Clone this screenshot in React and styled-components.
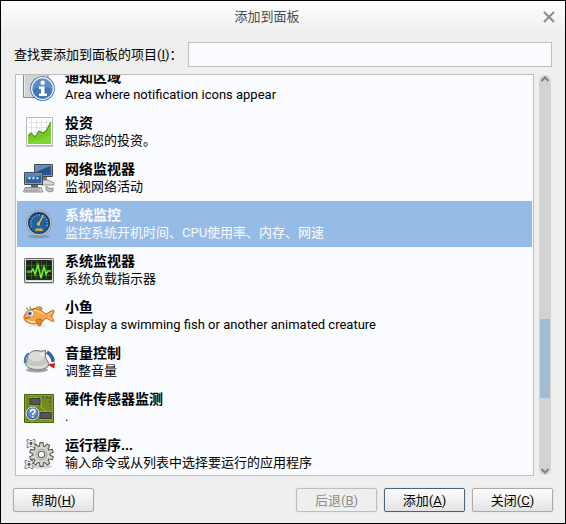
import React, { useLayoutEffect, useRef, useState } from "react";
import styled, { createGlobalStyle, css } from "styled-components";

const GlobalStyle = createGlobalStyle`
  * { box-sizing: border-box; }
  body { margin: 0; background: #efefef; }
  body, button, input {
    font-family: Roboto, "Noto Sans CJK SC", sans-serif;
    font-size: 13px;
    line-height: 17px;
  }
`;

const Dialog = styled.main`
  display: flex;
  flex-direction: column;
  height: 100vh;
  border: 1px solid #000;
  background: #efefef;
  color: #000;
`;

const TitleBar = styled.header`
  display: grid;
  grid-template-columns: 1fr 32px;
  align-items: center;
  height: 30px;
  flex: none;
  background: linear-gradient(#fefefe, #efefef);
`;

const Title = styled.h1`
  margin: 0;
  text-align: center;
  font-size: 13px;
  font-weight: 400;
  color: #4c4c4c;
`;

const CloseButton = styled.button`
  display: flex;
  justify-content: center;
  padding: 2px 0 0;
  border: 0;
  background: none;
  color: #8f8f8f;
`;

const SearchRow = styled.div`
  display: flex;
  align-items: center;
  gap: 8px;
  flex: none;
  padding: 11px 13px 7px;
`;

const SearchLabel = styled.label`
  flex: none;
  width: 166px;
  white-space: nowrap;
`;

const SearchInput = styled.input`
  flex: 1;
  min-width: 0;
  height: 25px;
  padding: 0 6px;
  border: 1px solid #bdbdbd;
  background: #f9fbff;
  outline: 0;
`;

const Body = styled.section`
  display: flex;
  gap: 5px;
  flex: 1;
  min-height: 0;
  padding: 0 14px;
`;

const ListBox = styled.ul`
  flex: 1;
  min-width: 0;
  margin: 0;
  padding: 0 1px;
  list-style: none;
  overflow-y: auto;
  scrollbar-width: none;
  border: 1px solid #bdbdbd;
  background: #f9fbff;
`;

const Item = styled.li`
  display: flex;
  align-items: center;
  gap: 10px;
  height: 46px;
  padding: 0 6px;
  ${(p) => p.$selected && css`
    background: #96bbe6;
    color: #f9fbff;
  `}
`;

const IconArt = styled.svg`
  flex: none;
  width: 32px;
  height: 32px;
`;

const ItemText = styled.div`
  display: grid;
  gap: 1px;
  min-width: 0;
  white-space: nowrap;
`;

const ItemTitle = styled.div`
  font-size: 14px;
  line-height: 16px;
  font-weight: 700;
`;

const ItemNote = styled.div`
  font-size: 13px;
`;

const Scrollbar = styled.div`
  display: flex;
  flex-direction: column;
  align-items: stretch;
  width: 12px;
  margin: 1px 0;
  padding: 0 1px;
  border-radius: 6px;
  background: #d3d3d3;
`;

const Arrow = styled.svg`
  width: 10px;
  height: 8px;
  flex: none;
`;

const TrackSpace = styled.div`
  flex: ${(p) => p.$part} 1 0;
`;

const Thumb = styled.div`
  flex: 79 1 0;
  background: #a1bdd6;
`;

const Footer = styled.footer`
  display: flex;
  gap: 7px;
  flex: none;
  padding: 12px 12px 11px;
`;

const ActionButton = styled.button`
  width: 81px;
  height: 24px;
  padding: 0;
  border: 1px solid #aaa;
  border-radius: 2px;
  background: linear-gradient(#fdfdfd, #e3e3e3);
  box-shadow: 0 0 0 1px #e9e9e9;
  color: #000;
  ${(p) => p.$primary && css`
    border-color: #46647f;
    box-shadow: 0 0 0 1px #dfe8ef;
  `}
  &:first-child { margin-right: auto; }
  &:disabled {
    border-color: #bdbdbd;
    background: #efefef;
    color: #8c8c8c;
  }
`;

const NotificationIcon = () => (
  <IconArt viewBox="0 0 32 32" aria-hidden="true">
    <path d="M.5 1H25V27.5H.5z" fill="#d2d4cd" stroke="#888a85" />
    <path d="M1.5 2V26.5" stroke="#eeeeec" />
    <circle cx="19.5" cy="18.5" r="12.3" fill="#3465a4" />
    <circle cx="19.5" cy="18.5" r="10.8" fill="#5c8ec6" stroke="#fff" strokeWidth="1.3" />
    <path d="M9.5 19a10 10 0 0 0 20 0q-10-4-20 0" fill="#4478b5" />
    <circle cx="19.7" cy="12.8" r="2.2" fill="#fff" />
    <path d="M16 16.5h5.5v7H24V26h-8v-2.5h2V19h-2z" fill="#fff" />
  </IconArt>
);

const StockIcon = () => (
  <IconArt viewBox="0 0 32 32" aria-hidden="true">
    <path d="M2.5 30.5h28" stroke="#c9cbc6" />
    <path d="M3.5 1.5h26v28h-26z" fill="#fff" stroke="#b5b7b2" />
    <path d="M8.5 3v25M13.5 3v25M18.5 3v25M23.5 3v25M5 6.5h23M5 11.5h23M5 16.5h23M5 21.5h23" stroke="#dcdedb" strokeWidth=".8" />
    <path d="M5 20l3-3 4 4 4-6 4 2 3-2 5-9v22H5z" fill="#73c92d" />
    <path d="M5 20l3-3 4 4 4-6 4 2 3-2 5-9" fill="none" stroke="#4e9a06" strokeWidth="1.2" />
    <path d="M5 25q12 0 23-6v9H5z" fill="#8ae234" opacity=".55" />
  </IconArt>
);

const NetworkIcon = () => (
  <IconArt viewBox="0 0 32 32" aria-hidden="true">
    <path d="M15 18h10l6 3v2H18z" fill="#d7d9d4" stroke="#777974" strokeWidth=".8" />
    <path d="M11.5 2.5h18v12h-18z" fill="#d3d7cf" stroke="#454744" />
    <path d="M12.500 3.500h16v10h-16z" fill="#25558e" />
    <path d="M12.500 3.500h16L12.500 10z" fill="#5f8fc2" />
    <path d="M18 15h6v3h-6z" fill="#777974" />
    <path d="M8 23h7v3H8z" fill="#666864" />
    <path d="M1.500 10.500h18v12h-18z" fill="#d3d7cf" stroke="#454744" />
    <path d="M2.500 11.500h16v10h-16z" fill="#2d609d" />
    <path d="M2.500 11.500h16v2L2.500 17z" fill="#5784b8" />
    <path d="M5.500 15.200h2v2h-2zM9.500 15.200h2v2h-2zM13.500 15.200h2v2h-2z" fill="#eaf2fb" />
    <path d="M2 25.500h16l2 4.500H.5z" fill="#d3d7cf" stroke="#777974" strokeWidth=".8" />
    <path d="M3 27h14M2 28.700h14" stroke="#8b8d88" strokeDasharray="2 .6" />
    <path d="M23 24.500l4 2 3-.5v3l-4 1-3-2z" fill="#c4c6c1" stroke="#777974" strokeWidth=".8" />
  </IconArt>
);

const GaugeIcon = () => (
  <IconArt viewBox="0 0 32 32" aria-hidden="true">
    <ellipse cx="16" cy="28.500" rx="11" ry="1.700" fill="#6787ac" opacity=".65" />
    <circle cx="16" cy="15" r="13" fill="#9c9f9c" />
    <circle cx="16" cy="15" r="12" fill="#bfc2c0" />
    <circle cx="16" cy="15" r="11" fill="#103d70" />
    <circle cx="16" cy="15.500" r="9.500" fill="#1e619d" />
    <path d="M8.500 19A8.300 8.300 0 1 1 23.500 19" fill="none" stroke="#91b9dc" strokeWidth="2" strokeDasharray=".8 2" />
    <path d="M15 17L20.500 7" stroke="#f6c32a" strokeWidth="1.500" />
    <circle cx="15.500" cy="16" r="1.800" fill="#e9b530" />
    <path d="M12.500 20.500h7v2.500h-7z" fill="#f1b73b" />
    <path d="M14.500 21v2M17 21v2" stroke="#6f6540" strokeWidth=".6" />
  </IconArt>
);

const MonitorIcon = () => (
  <IconArt viewBox="0 0 32 32" aria-hidden="true">
    <path d="M1 28h30v2H1z" fill="#b1b4b0" opacity=".6" />
    <rect x="1.500" y="4.500" width="29" height="24" rx="1" fill="#d8dad5" stroke="#646661" />
    <path d="M3.500 6.500h25v19h-25z" fill="#192813" stroke="#2a2c29" />
    <path d="M8.500 7v18M13.500 7v18M18.500 7v18M23.500 7v18M4 11.500h24M4 16.500h24M4 21.500h24" stroke="#34742a" strokeWidth=".8" />
    <path d="M4 18h4l2-3 2 5 3-9 3 13 3-11 2 7 2-3h3" fill="none" stroke="#3e991c" strokeWidth="2.400" opacity=".55" />
    <path d="M4 18h4l2-3 2 5 3-9 3 13 3-11 2 7 2-3h3" fill="none" stroke="#82f33b" strokeWidth="1.200" />
    <path d="M5 27.500h22" stroke="#fff" strokeWidth=".8" />
  </IconArt>
);

const FishIcon = () => (
  <IconArt viewBox="0 0 32 32" aria-hidden="true">
    <ellipse cx="14" cy="26" rx="9" ry="1.200" fill="#c9cbd0" opacity=".5" />
    <path d="M11 9q5-4 8-1l-1 4z" fill="#f39b36" stroke="#b75f13" strokeWidth=".8" />
    <path d="M.8 17Q3 9 11 9q7 0 12 5l7-4q2 0 .5 3l-2 4 2 3q1 2-1 1.500L23 18q-4 6-13 6Q1 23 .8 17z" fill="#f5a44a" stroke="#bd6516" strokeWidth=".9" />
    <path d="M3 19q9 5 17-1-4 5-11 5-4-1-6-4z" fill="#ffe0ad" />
    <path d="M11 10q7 1 10 5" stroke="#ffd293" strokeWidth="1.500" fill="none" />
    <path d="M13 20q5-2 6 0l-1 5-2 1q-3-2-3-6z" fill="#e78325" stroke="#b75f13" strokeWidth=".8" />
    <path d="M2 18q3 1 5-1" fill="none" stroke="#9e4708" />
    <circle cx="7.500" cy="13.500" r="3.300" fill="#fff" stroke="#b97539" strokeWidth=".6" />
    <circle cx="7" cy="13.500" r="1.900" fill="#508ac6" />
    <circle cx="6.700" cy="13.500" r=".9" fill="#182b46" />
    <path d="M5 10L3.500 7.500M7.500 9.500L7 6.500M9.500 10L11 8" stroke="#4c4c4c" strokeWidth=".9" />
    <path d="M25 15l4-3M25 17l4 3" stroke="#ffd293" />
  </IconArt>
);

const VolumeIcon = () => (
  <IconArt viewBox="0 0 32 32" aria-hidden="true">
    <path d="M2 17Q1 10 6 7.500" fill="none" stroke="#3f72ad" strokeWidth="2" />
    <path d="M24 6q6 4 6 10" fill="none" stroke="#2b62a4" strokeWidth="3.500" />
    <path d="M24.500 18.500l7.500-1.500-.8 5.500z" fill="#e31212" />
    <ellipse cx="14" cy="24" rx="11" ry="2.500" fill="#777" opacity=".65" />
    <path d="M5 10q2-5.500 9-5.500l5 .8 3.500-1L22.500 11l3.500 7q-1 6-12 6-10-1-11.500-6z" fill="#c6c8c2" stroke="#777974" />
    <path d="M4 18q4 3 11 2.500 6-.5 9.500-3.500Q24 22 14 22.500 5 22 4 18z" fill="#e2e3df" />
    <ellipse cx="13.500" cy="10.500" rx="8" ry="4.800" fill="#dcddd8" />
    <path d="M16 8l5.500-2.500-.5 6z" fill="#eeeeec" />
  </IconArt>
);

const SensorIcon = () => (
  <IconArt viewBox="0 0 32 32" aria-hidden="true">
    <path d="M1.500 2.500h29v28h-29z" fill="#718a18" stroke="#4b600c" />
    <path d="M2.500 3.500h27v26h-27z" fill="none" stroke="#8a9e33" />
    <path d="M18 5v10l5 4M12 15v4M16 22h5" fill="none" stroke="#a6b554" />
    <path d="M7 6.500h10v6H7zM17 20.500h11v6H17z" fill="#555753" stroke="#393b37" />
    <path d="M7 5.500h9M7 13.500h9M17 19.500h11M17 27.500h11" stroke="#b9bcb0" strokeDasharray="1.500 1.500" />
    <path d="M19 5.500h6M27 5v9" stroke="#365c7e" strokeWidth="2" strokeDasharray="2 2" />
    <circle cx="9.500" cy="21.500" r="6.400" fill="#3465a4" stroke="#d6e3f2" />
    <circle cx="9.500" cy="21" r="5" fill="#5e8fc8" />
    <path d="M7.500 20q0-2.500 2.200-2.500 2.200 0 2.200 2 0 1-1.200 1.800-1 .7-1 1.700M9.700 24.300v1.500" fill="none" stroke="#fff" strokeWidth="1.600" />
  </IconArt>
);

const TEETH = [0, 36, 72, 108, 144, 180, 216, 252, 288, 324];

const Cog = ({ x, y, scale, fill }) => (
  <g transform={`translate(${x} ${y}) scale(${scale})`}>
    {TEETH.map((angle) => (
      <path key={angle} transform={`rotate(${angle})`} d="M-2-7l.6-4h2.800L2-7" fill={fill} stroke="#5b5d59" />
    ))}
    <circle r="8" fill={fill} stroke="#5b5d59" />
    {TEETH.map((angle) => (
      <path key={angle} transform={`rotate(${angle})`} d="M-1.300-7h2.600v-1.800h-2.600z" fill={fill} />
    ))}
    <circle r="5" fill="none" stroke="#8b8d88" strokeWidth=".7" />
    <circle r="3" fill="#f9fbff" stroke="#5b5d59" />
  </g>
);

const SmallCog = ({ x, y }) => (
  <g transform={`translate(${x} ${y})`}>
    <path d="M-4-4h2l1 1h2l1-1h2v2.500l-1 1v1l1 1V4H2L1 3h-2l-1 1h-2V1.500l1-1v-1l-1-1z" fill="#e4e5e1" stroke="#696b67" strokeWidth=".8" />
    <circle r="1.400" fill="#4c4e4a" />
  </g>
);

const GearsIcon = () => (
  <IconArt viewBox="0 0 32 32" aria-hidden="true">
    <ellipse cx="19" cy="28.500" rx="10" ry="2" fill="#888" opacity=".35" />
    <Cog x={18.500} y={16.500} scale={1.080} fill="#d6d8d3" />
    <SmallCog x={8} y={5.500} />
    <SmallCog x={6} y={26.500} />
  </IconArt>
);

const ITEMS = [
  { title: "通知区域", note: "Area where notification icons appear", Icon: NotificationIcon },
  { title: "投资", note: "跟踪您的投资。", Icon: StockIcon },
  { title: "网络监视器", note: "监视网络活动", Icon: NetworkIcon },
  { title: "系统监控", note: "监控系统开机时间、CPU使用率、内存、网速", Icon: GaugeIcon },
  { title: "系统监视器", note: "系统负载指示器", Icon: MonitorIcon },
  { title: "小鱼", note: "Display a swimming fish or another animated creature", Icon: FishIcon },
  { title: "音量控制", note: "调整音量", Icon: VolumeIcon },
  { title: "硬件传感器监测", note: ".", Icon: SensorIcon },
  { title: "运行程序...", note: "输入命令或从列表中选择要运行的应用程序", Icon: GearsIcon },
];

export default function App() {
  const listRef = useRef(null);
  const [selected, setSelected] = useState(3);

  useLayoutEffect(() => {
    listRef.current.scrollTop = 12;
  }, []);

  return (
    <>
      <GlobalStyle />
      <Dialog>
        <TitleBar>
          <Title>添加到面板</Title>
          <CloseButton aria-label="关闭窗口">
            <svg width="12" height="12" viewBox="0 0 12 12" aria-hidden="true">
              <path d="M1 1l10 10M11 1L1 11" stroke="currentColor" strokeWidth="2.200" />
            </svg>
          </CloseButton>
        </TitleBar>
        <SearchRow>
          <SearchLabel htmlFor="query">查找要添加到面板的项目(<u>I</u>)：</SearchLabel>
          <SearchInput id="query" type="text" />
        </SearchRow>
        <Body>
          <ListBox ref={listRef} role="listbox">
            {ITEMS.map(({ title, note, Icon }, index) => (
              <Item
                key={title}
                role="option"
                aria-selected={index === selected}
                $selected={index === selected}
                onClick={() => setSelected(index)}
              >
                <Icon />
                <ItemText>
                  <ItemTitle>{title}</ItemTitle>
                  <ItemNote>{note}</ItemNote>
                </ItemText>
              </Item>
            ))}
          </ListBox>
          <Scrollbar aria-hidden="true">
            <Arrow viewBox="0 0 10 8">
              <path d="M1.500 6L5 2.500 8.500 6" fill="none" stroke="#808080" strokeWidth="2" />
            </Arrow>
            <TrackSpace $part={235} />
            <Thumb />
            <TrackSpace $part={69} />
            <Arrow viewBox="0 0 10 8">
              <path d="M1.500 2L5 5.500 8.500 2" fill="none" stroke="#808080" strokeWidth="2" />
            </Arrow>
          </Scrollbar>
        </Body>
        <Footer>
          <ActionButton>帮助(<u>H</u>)</ActionButton>
          <ActionButton disabled>后退(<u>B</u>)</ActionButton>
          <ActionButton $primary>添加(<u>A</u>)</ActionButton>
          <ActionButton>关闭(<u>C</u>)</ActionButton>
        </Footer>
      </Dialog>
    </>
  );
}
